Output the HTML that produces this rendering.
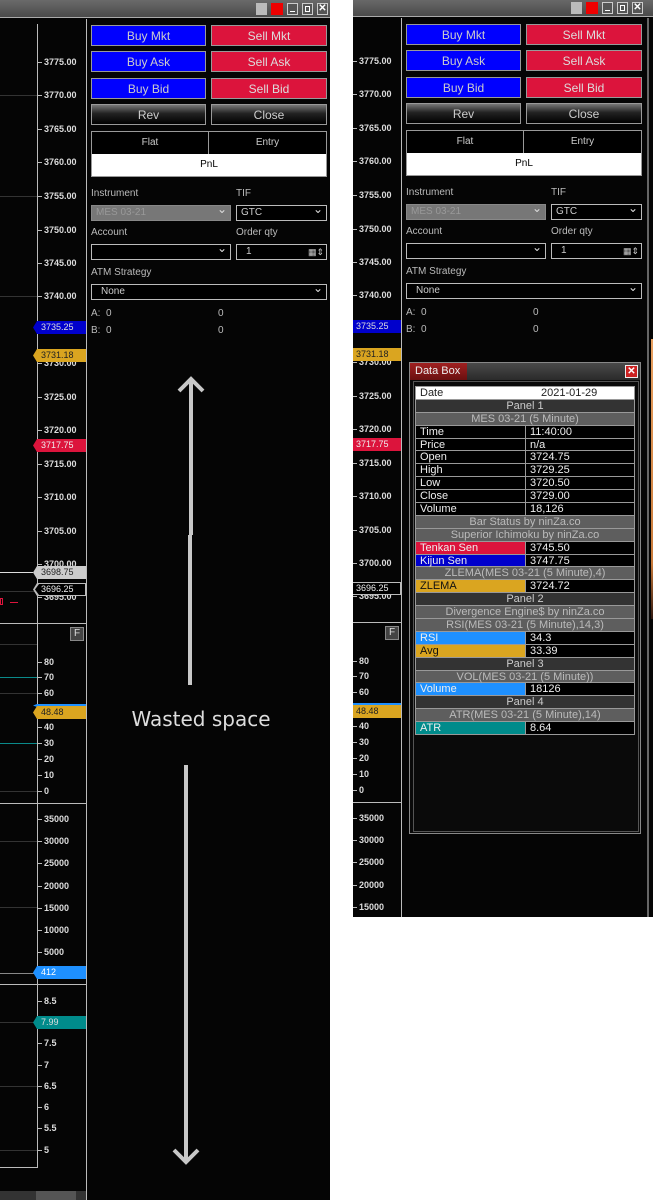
<!DOCTYPE html>
<html><head><meta charset="utf-8"><style>
*{margin:0;padding:0;box-sizing:border-box}
body{width:653px;height:1200px;background:#fff;position:relative;overflow:hidden;font-family:"Liberation Sans",sans-serif}
.w{position:absolute;top:0;width:345px;background:#050505;overflow:hidden}
.a{position:absolute}
.tb{left:0;top:0;width:345px;height:18px;background:linear-gradient(#6a6a6a,#4a4a4a);border-bottom:1px solid #aaa}
.t{position:absolute;left:44px;font-size:9px;color:#ddd;line-height:10px;font-weight:bold}
.t:before{content:"";position:absolute;left:-6px;top:5px;width:4px;height:1px;background:#bbb}
.lb{position:absolute;left:33px;width:53px;height:13px;font-size:9px;line-height:13px;padding-left:8px;clip-path:polygon(4px 0,100% 0,100% 100%,4px 100%,0 50%)}
.bt{position:absolute;width:115px;height:21px;font-size:12px;text-align:center;line-height:20px;border:1px solid #999}
.bb{background:#0000ff;color:#ccc}
.br{background:#dc143c;color:#ddd}
.bg{background:linear-gradient(#777,#222 45%,#000);color:#ccc;font-size:12px}
.lab{position:absolute;font-size:10px;color:#bbb}
.dd{position:absolute;height:16px;border:1px solid #bbb;background:#000;color:#ccc;font-size:10px;line-height:14px;padding-left:4px}
.dd:after{content:"⌄";position:absolute;right:3px;top:-4px;font-size:12px;color:#ddd}
.gl{position:absolute;left:0;width:37px;height:1px;background:#333}
.hb{position:absolute;left:0;width:86px;height:1px;background:#bbb}
.db{position:absolute;left:415px;width:220px}
.r{height:12.9px;font-size:11px;line-height:12px;display:flex;border-bottom:1px solid #999}
.r div{padding-left:4px}
.r .k{width:110px;border-right:1px solid #999}
.p{background:#333;color:#ccc;justify-content:center}
.s{background:#5e5e5e;color:#bbb;justify-content:center}
.d{background:#000;color:#eee}
</style></head><body>

<!-- LEFT WINDOW -->
<div class="w" style="left:0;height:1200px;width:330px">
<div class="a tb"></div>
<div class="a" style="left:256px;top:3px;width:11px;height:12px;background:#bbb"></div>
<div class="a" style="left:271px;top:3px;width:12px;height:12px;background:#e00"></div>
<div class="a" style="left:287px;top:3px;width:11px;height:12px;border:1px solid #ccc;background:#555"><div style="position:absolute;left:2px;bottom:2px;width:5px;height:1px;background:#fff"></div></div>
<div class="a" style="left:302px;top:3px;width:11px;height:12px;border:1px solid #ccc;background:#555"><div style="position:absolute;left:2px;top:2px;width:5px;height:6px;border:1px solid #fff"></div></div>
<div class="a" style="left:317px;top:3px;width:11px;height:12px;border:1px solid #ccc;background:#555;color:#fff;font-size:10px;line-height:10px;text-align:center;font-weight:bold">✕</div>
<div class="a" style="left:37px;top:24px;width:1px;height:1143px;background:#bbb"></div>
<div class="a" style="left:86px;top:19px;width:1px;height:1181px;background:#bbb"></div>
<div class="a" style="left:0;top:1167px;width:38px;height:1px;background:#bbb"></div>
<div class="a" style="left:0;top:1191px;width:86px;height:9px;background:#333"></div>
<div class="a" style="left:36px;top:1191px;width:40px;height:9px;background:#555"></div>
<div class="gl" style="top:95px"></div><div class="gl" style="top:196px"></div><div class="gl" style="top:296px"></div>
<div class="gl" style="top:572px;background:#ddd;width:33px"></div>
<div class="gl" style="top:591px"></div>
<div class="a" style="left:0;top:598px;width:3px;height:7px;border:1px solid #dc143c"></div>
<div class="a" style="left:10px;top:602px;width:8px;height:1px;background:#dc143c"></div>
<div class="gl" style="top:644px"></div>
<div class="gl" style="top:677px;background:#0a8a8a"></div><div class="gl" style="top:693px"></div>
<div class="gl" style="top:743px;background:#0a8a8a"></div><div class="gl" style="top:791px"></div>
<div class="gl" style="top:841px"></div><div class="gl" style="top:907px"></div>
<div class="gl" style="top:973px;background:#888"></div>
<div class="gl" style="top:1022px"></div><div class="gl" style="top:1086px"></div><div class="gl" style="top:1150px"></div>
<div class="hb" style="top:623px"></div><div class="hb" style="top:803px"></div><div class="hb" style="top:984px"></div>
<div class="t" style="top:57px">3775.00</div><div class="t" style="top:90px">3770.00</div><div class="t" style="top:124px">3765.00</div><div class="t" style="top:157px">3760.00</div><div class="t" style="top:191px">3755.00</div><div class="t" style="top:225px">3750.00</div><div class="t" style="top:258px">3745.00</div><div class="t" style="top:291px">3740.00</div>
<div class="t" style="top:358px">3730.00</div><div class="t" style="top:392px">3725.00</div><div class="t" style="top:425px">3720.00</div><div class="t" style="top:459px">3715.00</div><div class="t" style="top:492px">3710.00</div><div class="t" style="top:526px">3705.00</div><div class="t" style="top:559px">3700.00</div><div class="t" style="top:592px">3695.00</div>
<div class="lb" style="top:321px;background:#0000cc;color:#ddd">3735.25</div>
<div class="lb" style="top:349px;background:#daa520;color:#222">3731.18</div>
<div class="lb" style="top:439px;background:#dc143c;color:#eee">3717.75</div>
<div class="lb" style="top:566px;background:#ccc;color:#222">3698.75</div>
<div class="lb" style="top:583px;background:#bbb;color:#eee"><div style="position:absolute;inset:1px 1px 1px 2px;background:#000;clip-path:polygon(4px 0,100% 0,100% 100%,4px 100%,0 50%)"></div><span style="position:relative">3696.25</span></div>
<div class="a" style="left:70px;top:627px;width:14px;height:14px;background:#444;border:1px solid #888;color:#ddd;font-size:10px;text-align:center;line-height:12px">F</div>
<div class="t" style="top:657px">80</div><div class="t" style="top:672px">70</div><div class="t" style="top:688px">60</div><div class="t" style="top:722px">40</div><div class="t" style="top:738px">30</div><div class="t" style="top:754px">20</div><div class="t" style="top:770px">10</div><div class="t" style="top:786px">0</div>
<div class="lb" style="top:704px;height:3px;background:#1e90ff"></div>
<div class="lb" style="top:706px;background:#daa520;color:#222">48.48</div>
<div class="t" style="top:814px">35000</div><div class="t" style="top:836px">30000</div><div class="t" style="top:858px">25000</div><div class="t" style="top:881px">20000</div><div class="t" style="top:903px">15000</div><div class="t" style="top:925px">10000</div><div class="t" style="top:947px">5000</div>
<div class="lb" style="top:966px;background:#1e90ff;color:#fff">412</div>
<div class="t" style="top:996px">8.5</div><div class="t" style="top:1038px">7.5</div><div class="t" style="top:1060px">7</div><div class="t" style="top:1081px">6.5</div><div class="t" style="top:1102px">6</div><div class="t" style="top:1123px">5.5</div><div class="t" style="top:1145px">5</div>
<div class="lb" style="top:1016px;background:#008b8b;color:#ddd">7.99</div>
<div class="bt bb" style="left:91px;top:25px">Buy Mkt</div><div class="bt br" style="left:211px;top:25px;width:116px">Sell Mkt</div>
<div class="bt bb" style="left:91px;top:51px">Buy Ask</div><div class="bt br" style="left:211px;top:51px;width:116px">Sell Ask</div>
<div class="bt bb" style="left:91px;top:78px">Buy Bid</div><div class="bt br" style="left:211px;top:78px;width:116px">Sell Bid</div>
<div class="bt bg" style="left:91px;top:104px">Rev</div><div class="bt bg" style="left:211px;top:104px;width:116px">Close</div>
<div class="a" style="left:91px;top:131px;width:236px;height:46px;border:1px solid #999;background:#000">
<div class="a" style="left:0;top:0;width:117px;height:22px;border-right:1px solid #999;color:#ccc;font-size:10px;text-align:center;line-height:22px">Flat</div>
<div class="a" style="left:117px;top:0;width:117px;height:22px;color:#ccc;font-size:10px;text-align:center;line-height:22px">Entry</div>
<div class="a" style="left:0;top:22px;width:234px;height:22px;background:#fff;color:#000;font-size:10px;text-align:center;line-height:22px">PnL</div></div>
<div class="lab" style="left:91px;top:188px">Instrument</div><div class="lab" style="left:236px;top:188px">TIF</div>
<div class="dd" style="left:91px;top:205px;width:140px;background:#777;color:#999;border-color:#888">MES 03-21</div>
<div class="dd" style="left:236px;top:205px;width:91px">GTC</div>
<div class="lab" style="left:91px;top:227px">Account</div><div class="lab" style="left:236px;top:227px">Order qty</div>
<div class="dd" style="left:91px;top:244px;width:140px"></div>
<div class="a" style="left:236px;top:244px;width:91px;height:16px;border:1px solid #bbb;background:#000;color:#ccc;font-size:10px;line-height:14px;padding-left:9px">1<span style="position:absolute;right:2px;top:0;font-size:9px">▦⇕</span></div>
<div class="lab" style="left:91px;top:267px">ATM Strategy</div>
<div class="dd" style="left:91px;top:284px;width:236px;padding-left:9px">None</div>
<div class="lab" style="left:91px;top:308px">A:&nbsp; 0</div><div class="lab" style="left:218px;top:308px">0</div>
<div class="lab" style="left:91px;top:325px">B:&nbsp; 0</div><div class="lab" style="left:218px;top:325px">0</div>
<svg class="a" style="left:0;top:0" width="330" height="1200"><g stroke="#c8c8c8" stroke-width="4" fill="none">
<path d="M191 380V535M190 535V685M179 391L191 379L203 391"/>
<path d="M186 765V1162M174 1150L186 1162L198 1150"/></g>
<text x="201" y="726" fill="#ddd" font-size="20" text-anchor="middle" font-family="DejaVu Sans,sans-serif">Wasted space</text></svg>
</div>

<!-- RIGHT WINDOW -->
<div class="a" style="left:353px;top:0;width:300px;height:917px;overflow:hidden;background:#050505">
<div class="w" style="left:-38px;top:-1px;height:918px;width:345px">
<div class="a tb"></div>
<div class="a" style="left:256px;top:3px;width:11px;height:12px;background:#bbb"></div>
<div class="a" style="left:271px;top:3px;width:12px;height:12px;background:#e00"></div>
<div class="a" style="left:287px;top:3px;width:11px;height:12px;border:1px solid #ccc;background:#555"><div style="position:absolute;left:2px;bottom:2px;width:5px;height:1px;background:#fff"></div></div>
<div class="a" style="left:302px;top:3px;width:11px;height:12px;border:1px solid #ccc;background:#555"><div style="position:absolute;left:2px;top:2px;width:5px;height:6px;border:1px solid #fff"></div></div>
<div class="a" style="left:317px;top:3px;width:11px;height:12px;border:1px solid #ccc;background:#555;color:#fff;font-size:10px;line-height:10px;text-align:center;font-weight:bold">✕</div>
<div class="a" style="left:37px;top:24px;width:1px;height:900px;background:#bbb"></div>
<div class="a" style="left:86px;top:19px;width:1px;height:900px;background:#bbb"></div>
<div class="hb" style="top:623px"></div><div class="hb" style="top:803px"></div>
<div class="t" style="top:57px">3775.00</div><div class="t" style="top:90px">3770.00</div><div class="t" style="top:124px">3765.00</div><div class="t" style="top:157px">3760.00</div><div class="t" style="top:191px">3755.00</div><div class="t" style="top:225px">3750.00</div><div class="t" style="top:258px">3745.00</div><div class="t" style="top:291px">3740.00</div>
<div class="t" style="top:358px">3730.00</div><div class="t" style="top:392px">3725.00</div><div class="t" style="top:425px">3720.00</div><div class="t" style="top:459px">3715.00</div><div class="t" style="top:492px">3710.00</div><div class="t" style="top:526px">3705.00</div><div class="t" style="top:559px">3700.00</div><div class="t" style="top:592px">3695.00</div>
<div class="lb" style="top:321px;background:#0000cc;color:#ddd">3735.25</div>
<div class="lb" style="top:349px;background:#daa520;color:#222">3731.18</div>
<div class="lb" style="top:439px;background:#dc143c;color:#eee">3717.75</div>
<div class="lb" style="top:583px;background:#bbb;color:#eee"><div style="position:absolute;inset:1px 1px 1px 2px;background:#000"></div><span style="position:relative">3696.25</span></div>
<div class="a" style="left:70px;top:627px;width:14px;height:14px;background:#444;border:1px solid #888;color:#ddd;font-size:10px;text-align:center;line-height:12px">F</div>
<div class="t" style="top:657px">80</div><div class="t" style="top:672px">70</div><div class="t" style="top:688px">60</div><div class="t" style="top:722px">40</div><div class="t" style="top:738px">30</div><div class="t" style="top:754px">20</div><div class="t" style="top:770px">10</div><div class="t" style="top:786px">0</div>
<div class="lb" style="top:704px;height:3px;background:#1e90ff"></div>
<div class="lb" style="top:706px;background:#daa520;color:#222">48.48</div>
<div class="t" style="top:814px">35000</div><div class="t" style="top:836px">30000</div><div class="t" style="top:858px">25000</div><div class="t" style="top:881px">20000</div><div class="t" style="top:903px">15000</div>
<div class="bt bb" style="left:91px;top:25px">Buy Mkt</div><div class="bt br" style="left:211px;top:25px;width:116px">Sell Mkt</div>
<div class="bt bb" style="left:91px;top:51px">Buy Ask</div><div class="bt br" style="left:211px;top:51px;width:116px">Sell Ask</div>
<div class="bt bb" style="left:91px;top:78px">Buy Bid</div><div class="bt br" style="left:211px;top:78px;width:116px">Sell Bid</div>
<div class="bt bg" style="left:91px;top:104px">Rev</div><div class="bt bg" style="left:211px;top:104px;width:116px">Close</div>
<div class="a" style="left:91px;top:131px;width:236px;height:46px;border:1px solid #999;background:#000">
<div class="a" style="left:0;top:0;width:117px;height:22px;border-right:1px solid #999;color:#ccc;font-size:10px;text-align:center;line-height:22px">Flat</div>
<div class="a" style="left:117px;top:0;width:117px;height:22px;color:#ccc;font-size:10px;text-align:center;line-height:22px">Entry</div>
<div class="a" style="left:0;top:22px;width:234px;height:22px;background:#fff;color:#000;font-size:10px;text-align:center;line-height:22px">PnL</div></div>
<div class="lab" style="left:91px;top:188px">Instrument</div><div class="lab" style="left:236px;top:188px">TIF</div>
<div class="dd" style="left:91px;top:205px;width:140px;background:#777;color:#999;border-color:#888">MES 03-21</div>
<div class="dd" style="left:236px;top:205px;width:91px">GTC</div>
<div class="lab" style="left:91px;top:227px">Account</div><div class="lab" style="left:236px;top:227px">Order qty</div>
<div class="dd" style="left:91px;top:244px;width:140px"></div>
<div class="a" style="left:236px;top:244px;width:91px;height:16px;border:1px solid #bbb;background:#000;color:#ccc;font-size:10px;line-height:14px;padding-left:9px">1<span style="position:absolute;right:2px;top:0;font-size:9px">▦⇕</span></div>
<div class="lab" style="left:91px;top:267px">ATM Strategy</div>
<div class="dd" style="left:91px;top:284px;width:236px;padding-left:9px">None</div>
<div class="lab" style="left:91px;top:308px">A:&nbsp; 0</div><div class="lab" style="left:218px;top:308px">0</div>
<div class="lab" style="left:91px;top:325px">B:&nbsp; 0</div><div class="lab" style="left:218px;top:325px">0</div>
<div class="a" style="left:332px;top:19px;width:2px;height:900px;background:#666"></div>
<div class="a" style="left:336px;top:340px;width:4px;height:280px;background:linear-gradient(#e8a060,#c87a3a 80%,#301810)"></div>
</div></div>

<!-- DATA BOX -->
<div class="a" style="left:409px;top:362px;width:232px;height:472px;background:#0a0a0a;border:1px solid #888"></div>
<div class="a" style="left:410px;top:363px;width:230px;height:17px;background:linear-gradient(#4a4a4a,#2a2a2a)"></div>
<div class="a" style="left:410px;top:363px;width:57px;height:17px;background:linear-gradient(#a02020,#6a1010);color:#eee;font-size:11px;line-height:16px;padding-left:5px">Data Box</div>
<div class="a" style="left:625px;top:365px;width:13px;height:13px;background:#c22;border:1px solid #eee;color:#fff;font-size:10px;line-height:11px;text-align:center;font-weight:bold">✕</div>
<div class="a" style="left:413px;top:381px;width:226px;height:451px;border:1px solid #555"></div>
<div class="db" style="top:386px;border:1px solid #999;border-bottom:none">
<div class="r" style="background:#fff;color:#222"><div class="k" style="border:none">Date</div><div style="padding-left:15px">2021-01-29</div></div>
<div class="r p">Panel 1</div>
<div class="r s">MES 03-21 (5 Minute)</div>
<div class="r d"><div class="k">Time</div><div>11:40:00</div></div>
<div class="r d"><div class="k">Price</div><div>n/a</div></div>
<div class="r d"><div class="k">Open</div><div>3724.75</div></div>
<div class="r d"><div class="k">High</div><div>3729.25</div></div>
<div class="r d"><div class="k">Low</div><div>3720.50</div></div>
<div class="r d"><div class="k">Close</div><div>3729.00</div></div>
<div class="r d"><div class="k">Volume</div><div>18,126</div></div>
<div class="r s">Bar Status by ninZa.co</div>
<div class="r s">Superior Ichimoku by ninZa.co</div>
<div class="r d"><div class="k" style="background:#dc143c">Tenkan Sen</div><div>3745.50</div></div>
<div class="r d"><div class="k" style="background:#0000cc">Kijun Sen</div><div>3747.75</div></div>
<div class="r s">ZLEMA(MES 03-21 (5 Minute),4)</div>
<div class="r d"><div class="k" style="background:#daa520;color:#111">ZLEMA</div><div>3724.72</div></div>
<div class="r p">Panel 2</div>
<div class="r s">Divergence Engine$ by ninZa.co</div>
<div class="r s">RSI(MES 03-21 (5 Minute),14,3)</div>
<div class="r d"><div class="k" style="background:#1e90ff">RSI</div><div>34.3</div></div>
<div class="r d"><div class="k" style="background:#daa520;color:#111">Avg</div><div>33.39</div></div>
<div class="r p">Panel 3</div>
<div class="r s">VOL(MES 03-21 (5 Minute))</div>
<div class="r d"><div class="k" style="background:#1e90ff">Volume</div><div>18126</div></div>
<div class="r p">Panel 4</div>
<div class="r s">ATR(MES 03-21 (5 Minute),14)</div>
<div class="r d"><div class="k" style="background:#008b8b">ATR</div><div>8.64</div></div>
</div>
</body></html>
